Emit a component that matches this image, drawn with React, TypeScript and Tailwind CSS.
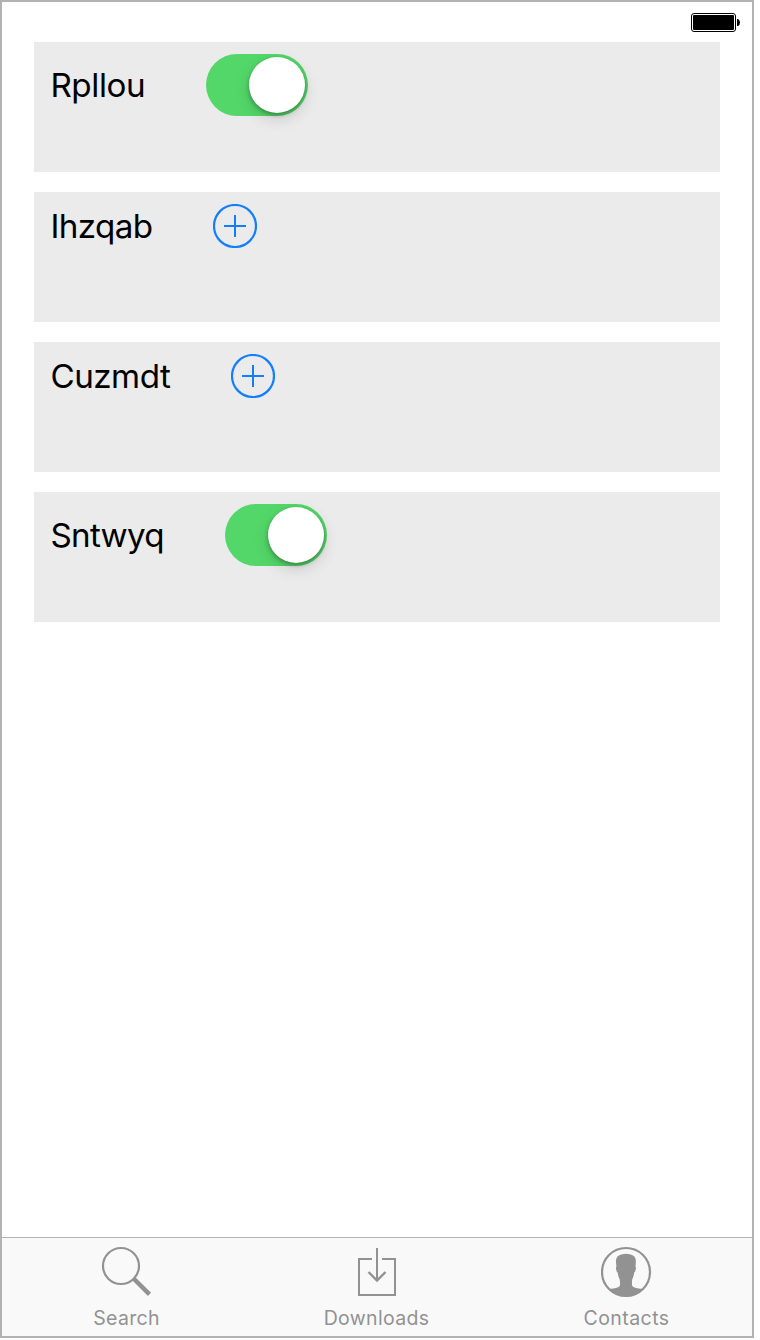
import React from "react";

function Toggle() {
  return (
    <div className="flex h-[62px] w-[102px] shrink-0 items-center justify-end rounded-full bg-[#53d769] pr-[3px]">
      <div className="size-14 rounded-full bg-white shadow-[0_6px_16px_rgba(0,0,0,0.14),0_2px_4px_rgba(0,0,0,0.30)]" />
    </div>
  );
}

function AddButton() {
  return (
    <svg className="size-11 shrink-0" viewBox="0 0 44 44" fill="none" stroke="#127efb" strokeWidth="2">
      <circle cx="22" cy="22" r="21" strokeWidth="2.2" />
      <path d="M22 11v22M11 22h22" />
    </svg>
  );
}

type RowProps = { label: string; text: string; children: React.ReactNode };

function Row({ label, text, children }: RowProps) {
  return (
    <div className="flex h-[130px] items-start bg-[#ebebeb] pt-3 pl-4">
      <div className="flex items-center">
        <span className={`shrink-0 whitespace-nowrap pl-[0.4px] text-[33.2px] leading-10 text-black ${text}`}>{label}</span>
        {children}
      </div>
    </div>
  );
}

function Tab({ label, text, children }: RowProps) {
  return (
    <div className="flex w-[250px] flex-col items-center pt-2">
      <svg className="h-[52px] w-[52px]" viewBox="0 0 52 52" fill="none" stroke="#929292" strokeWidth="2">
        {children}
      </svg>
      <span className={`mt-2 whitespace-nowrap pr-px text-[19.5px] leading-6 text-[#929292] ${text}`}>{label}</span>
    </div>
  );
}

export default function App() {
  return (
    <div className="h-[1340px] w-[760px] bg-white font-['Inter',sans-serif]">
      <div className="flex h-[1338px] w-[754px] flex-col border-2 border-[#b2b2b2] bg-white">
        <div className="flex h-10 shrink-0 justify-end pt-[11px] pr-3">
          <svg className="h-[19px] w-[49px]" viewBox="0 0 49 19">
            <rect x="0.5" y="0.5" width="44" height="18" rx="2.5" fill="white" stroke="black" />
            <rect x="2" y="2" width="41" height="15" rx="1" fill="black" />
            <path d="M46 6h1q2 1 2 3.5t-2 3.5h-1z" fill="black" />
          </svg>
        </div>
        <div className="flex grow flex-col gap-5 pr-8 pl-8">
          <Row label="Rpllou" text="w-[156px] tracking-[-0.4px]"><Toggle /></Row>
          <Row label="Ihzqab" text="w-[163px] tracking-[-0.6px]"><AddButton /></Row>
          <Row label="Cuzmdt" text="w-[181px] tracking-[-0.5px]"><AddButton /></Row>
          <Row label="Sntwyq" text="w-[175px] tracking-[-0.7px]"><Toggle /></Row>
        </div>
        <div className="flex h-[99px] shrink-0 border-t border-[#b2b2b2] bg-[#f9f9f9]">
          <Tab label="Search" text="tracking-[0.3px]">
            <circle cx="20" cy="20" r="18" strokeWidth="2.2" />
            <path d="M32.5 32.5 48.5 48.3" strokeWidth="4.5" />
          </Tab>
          <Tab label="Downloads" text="tracking-[0.33px]">
            <path d="M21 13H8v36h36V13H31M26 2v32" />
            <path d="M17.5 26l8.5 8.5 8.500-8.500" strokeWidth="2.4" />
          </Tab>
          <Tab label="Contacts" text="tracking-[0.45px]">
            <circle cx="25" cy="26" r="24" strokeWidth="2.2" />
            <path
              d="M7.700 43Q18.500 42 18.900 39.500Q19.300 37 18.700 33.500Q17 30.500 16.600 26.500Q15.300 26 14.900 22Q14.900 20.700 15.500 20.500Q14.600 16 15.200 13Q16.500 8 25 7.700Q33.500 8 34.600 13Q35.200 16 34.400 20.500Q35.100 20.700 35 22Q34.500 26 33.200 26.500Q32.800 30.500 31.200 33.500Q30.700 37 31.100 39.500Q31.500 42 42.300 43Q35 50.500 25 50.500Q15 50.500 7.700 43Z"
              fill="#929292"
              stroke="none"
            />
          </Tab>
        </div>
      </div>
    </div>
  );
}
